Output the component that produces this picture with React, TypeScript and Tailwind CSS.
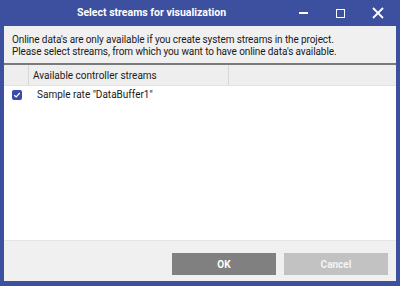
import { useState } from "react";

export default function App() {
  const [checked, setChecked] = useState(true);

  return (
    <div className="w-[400px] h-[286px] bg-[#3d4f9f] flex flex-col px-[4px] pb-[5px] font-['Roboto','Liberation_Sans',Arial,sans-serif] text-[10px] text-[#1a1a1a] overflow-hidden">
      {/* Title bar */}
      <div className="h-[26px] shrink-0 flex items-center text-white">
        <div className="flex-1 text-center font-bold text-[10.5px] pl-[14px]">Select streams for visualization</div>
        <div className="flex items-center">
          <div className="w-[37px] flex justify-center">
            <div className="w-[9px] h-[1.5px] bg-white" />
          </div>
          <div className="w-[37px] flex justify-center">
            <div className="w-[9px] h-[9px] border border-white" />
          </div>
          <div className="w-[37px] flex justify-center">
            <svg width="12" height="12" viewBox="0 0 12 12">
              <path d="M1 1 L11 11 M11 1 L1 11" stroke="white" strokeWidth="1.8" />
            </svg>
          </div>
        </div>
      </div>

      {/* Body */}
      <div className="flex-1 flex flex-col bg-[#f0f0f0]">
        <div className="h-[37px] shrink-0 px-[8px] pt-[8px] leading-[12px] text-[10px] tracking-[-0.1px]">
          <p>Online data's are only available if you create system streams in the project.</p>
          <p>Please select streams, from which you want to have online data's available.</p>
        </div>

        <div className="h-[177px] shrink-0 bg-white border-t-2 border-[#7a7a7a] flex flex-col">
          <div className="h-[21px] bg-[#eeeeee] flex border-b border-[#e2e2e2]">
            <div className="w-[25px] border-r border-[#d6d6d6]" />
            <div className="w-[200px] border-r border-[#d6d6d6] flex items-center pl-[4px]">
              Available controller streams
            </div>
            <div className="flex-1" />
          </div>
          <div className="h-[17px] flex items-center">
            <div className="w-[25px] flex justify-center">
              <button
                onClick={() => setChecked(!checked)}
                className={`w-[10px] h-[10px] rounded-[2px] flex items-center justify-center ${checked ? "bg-[#3a4ba8]" : "bg-white border border-[#888]"}`}
              >
                {checked && (
                  <svg width="8" height="8" viewBox="0 0 8 8">
                    <path d="M1.2 4.2 L3.2 6 L6.8 2" stroke="white" strokeWidth="1.2" fill="none" />
                  </svg>
                )}
              </button>
            </div>
            <div className="pl-[8px]">Sample rate "DataBuffer1"</div>
          </div>
        </div>

        <div className="flex-1 flex justify-end items-start gap-[8px] pt-[12px] pr-[8px] border-t border-[#e4e4e4]">
          <button className="w-[104px] h-[22px] bg-[#808080] text-white font-bold text-[10px]">OK</button>
          <button className="w-[104px] h-[22px] bg-[#c2c2c2] text-[#f4f4f4] font-bold text-[10px]">Cancel</button>
        </div>
      </div>
    </div>
  );
}
